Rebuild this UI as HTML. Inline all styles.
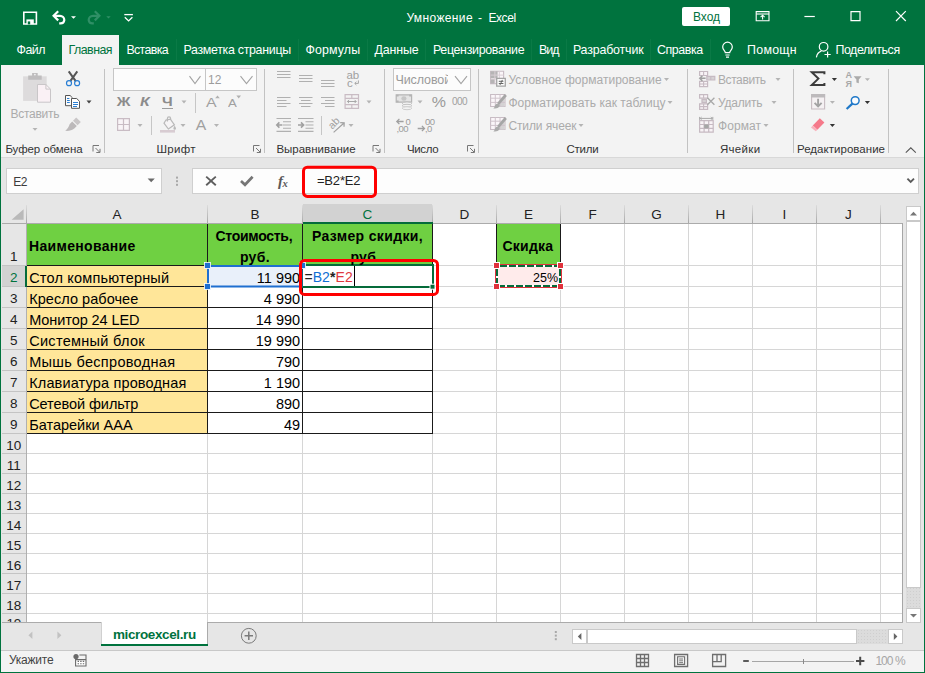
<!DOCTYPE html>
<html lang="ru"><head><meta charset="utf-8"><title>Умножение - Excel</title><style>
html,body{margin:0;padding:0}
body{width:925px;height:673px;overflow:hidden;position:relative;background:#e6e6e6;font-family:"Liberation Sans",sans-serif}
.b{position:absolute}
.t{position:absolute;white-space:pre;font-family:"Liberation Sans",sans-serif;line-height:18px}
svg.ov{position:absolute;left:0;top:0;pointer-events:none}
</style></head>
<body>
<div class="b" style="left:0px;top:0px;width:925px;height:65px;background:#00733e;"></div>
<div class="b" style="left:0px;top:65px;width:925px;height:92px;background:#f3f3f3;"></div>
<div class="b" style="left:0px;top:157px;width:925px;height:1px;background:#d8d8d8;"></div>
<div class="b" style="left:0px;top:158px;width:925px;height:465px;background:#e6e6e6;"></div>
<div class="b" style="left:0px;top:623px;width:925px;height:28px;background:#e6e6e6;"></div>
<div class="b" style="left:0px;top:650px;width:925px;height:23px;background:#f3f3f3;"></div>
<div class="b" style="left:0px;top:650px;width:925px;height:1px;background:#c8c8c8;"></div>
<div class="b" style="left:682px;top:7px;width:48px;height:19px;background:#ffffff;border-radius:2px;"></div>
<div class="b" style="left:62px;top:35px;width:57px;height:30px;background:#f3f3f3;"></div>
<div class="b" style="left:176px;top:39px;width:1px;height:22px;background:#0a7a46;"></div>
<div class="b" style="left:298px;top:39px;width:1px;height:22px;background:#0a7a46;"></div>
<div class="b" style="left:367px;top:39px;width:1px;height:22px;background:#0a7a46;"></div>
<div class="b" style="left:425px;top:39px;width:1px;height:22px;background:#0a7a46;"></div>
<div class="b" style="left:531px;top:39px;width:1px;height:22px;background:#0a7a46;"></div>
<div class="b" style="left:566px;top:39px;width:1px;height:22px;background:#0a7a46;"></div>
<div class="b" style="left:650px;top:39px;width:1px;height:22px;background:#0a7a46;"></div>
<div class="b" style="left:710px;top:39px;width:1px;height:22px;background:#0a7a46;"></div>
<div class="b" style="left:104px;top:69px;width:1px;height:84px;background:#c2c2c2;"></div>
<div class="b" style="left:264px;top:69px;width:1px;height:84px;background:#c2c2c2;"></div>
<div class="b" style="left:384px;top:69px;width:1px;height:84px;background:#c2c2c2;"></div>
<div class="b" style="left:478px;top:69px;width:1px;height:84px;background:#c2c2c2;"></div>
<div class="b" style="left:687px;top:69px;width:1px;height:84px;background:#c2c2c2;"></div>
<div class="b" style="left:793px;top:69px;width:1px;height:84px;background:#c2c2c2;"></div>
<div class="b" style="left:888px;top:69px;width:1px;height:84px;background:#c2c2c2;"></div>
<div class="b" style="left:113px;top:68px;width:93px;height:23px;background:#fcfcfc;border:1px solid #c6c6c6;box-sizing:border-box;"></div>
<div class="b" style="left:205px;top:68px;width:52px;height:23px;background:#fcfcfc;border:1px solid #c6c6c6;box-sizing:border-box;"></div>
<div class="b" style="left:162px;top:108px;width:11px;height:1px;background:#9c9c9c;"></div>
<div class="b" style="left:195px;top:93px;width:1px;height:20px;background:#c6c6c6;"></div>
<div class="b" style="left:151px;top:116px;width:1px;height:19px;background:#c6c6c6;"></div>
<div class="b" style="left:321px;top:116px;width:1px;height:19px;background:#c6c6c6;"></div>
<div class="b" style="left:393px;top:68px;width:78px;height:23px;background:#fcfcfc;border:1px solid #c6c6c6;box-sizing:border-box;"></div>
<div class="b" style="left:394px;top:70px;width:53.6px;height:19px;overflow:hidden"><span class="t u" id="numfmt" style="left:1.5px;top:1px;font-size:12.5px;color:#9a9a9a;letter-spacing:-0.1px">Числовой</span></div>
<span class="t u" style="left:405.5px;top:116.8px;font-size:9.5px;color:#9c9c9c;line-height:9px;letter-spacing:-0.6px">0</span>
<span class="t u" style="left:396.5px;top:124.2px;font-size:9.5px;color:#9c9c9c;line-height:9px;letter-spacing:-0.6px">,00</span>
<span class="t u" style="left:425.0px;top:116.8px;font-size:9.5px;color:#9c9c9c;line-height:9px;letter-spacing:-0.6px">00</span>
<span class="t u" style="left:425.0px;top:124.2px;font-size:9.5px;color:#9c9c9c;line-height:9px;letter-spacing:-0.6px">,0</span>
<div class="b" style="left:6px;top:168px;width:156px;height:26px;background:#fdfdfd;border:1px solid #cfcfcf;box-sizing:border-box;"></div>
<div class="b" style="left:192px;top:168px;width:727px;height:26px;background:#fdfdfd;border:1px solid #cfcfcf;box-sizing:border-box;"></div>
<span class="t" style="left:278px;top:171.5px;font-family:'Liberation Serif',serif;font-style:italic;font-weight:700;font-size:15px;line-height:18px;color:#5a5a5a;letter-spacing:-0.4px">f<span style="font-size:10.5px;position:relative;top:1.5px">x</span></span>
<div class="b" style="left:2px;top:204px;width:900px;height:20px;background:#e6e6e6;"></div>
<div class="b" style="left:27px;top:224px;width:875px;height:398px;background:#ffffff;"></div>
<div class="b" style="left:303px;top:204px;width:129px;height:19px;background:#d2d2d2;"></div>
<div class="b" style="left:26px;top:205px;width:1px;height:18px;background:linear-gradient(#dcdcdc,#a8a8a8)"></div>
<div class="b" style="left:207px;top:205px;width:1px;height:18px;background:linear-gradient(#dcdcdc,#a8a8a8)"></div>
<div class="b" style="left:302px;top:205px;width:1px;height:18px;background:linear-gradient(#dcdcdc,#a8a8a8)"></div>
<div class="b" style="left:432px;top:205px;width:1px;height:18px;background:linear-gradient(#dcdcdc,#a8a8a8)"></div>
<div class="b" style="left:496px;top:205px;width:1px;height:18px;background:linear-gradient(#dcdcdc,#a8a8a8)"></div>
<div class="b" style="left:560px;top:205px;width:1px;height:18px;background:linear-gradient(#dcdcdc,#a8a8a8)"></div>
<div class="b" style="left:624px;top:205px;width:1px;height:18px;background:linear-gradient(#dcdcdc,#a8a8a8)"></div>
<div class="b" style="left:688px;top:205px;width:1px;height:18px;background:linear-gradient(#dcdcdc,#a8a8a8)"></div>
<div class="b" style="left:752px;top:205px;width:1px;height:18px;background:linear-gradient(#dcdcdc,#a8a8a8)"></div>
<div class="b" style="left:816px;top:205px;width:1px;height:18px;background:linear-gradient(#dcdcdc,#a8a8a8)"></div>
<div class="b" style="left:880px;top:205px;width:1px;height:18px;background:linear-gradient(#dcdcdc,#a8a8a8)"></div>
<div class="b" style="left:2px;top:223px;width:901px;height:1px;background:#ababab;"></div>
<div class="b" style="left:303px;top:222px;width:130px;height:2px;background:#056b3a;"></div>
<div class="b" style="left:207px;top:224px;width:1px;height:398px;background:#d6d6d6;"></div>
<div class="b" style="left:302px;top:224px;width:1px;height:398px;background:#d6d6d6;"></div>
<div class="b" style="left:432px;top:224px;width:1px;height:398px;background:#d6d6d6;"></div>
<div class="b" style="left:496px;top:224px;width:1px;height:398px;background:#d6d6d6;"></div>
<div class="b" style="left:560px;top:224px;width:1px;height:398px;background:#d6d6d6;"></div>
<div class="b" style="left:624px;top:224px;width:1px;height:398px;background:#d6d6d6;"></div>
<div class="b" style="left:688px;top:224px;width:1px;height:398px;background:#d6d6d6;"></div>
<div class="b" style="left:752px;top:224px;width:1px;height:398px;background:#d6d6d6;"></div>
<div class="b" style="left:816px;top:224px;width:1px;height:398px;background:#d6d6d6;"></div>
<div class="b" style="left:880px;top:224px;width:1px;height:398px;background:#d6d6d6;"></div>
<div class="b" style="left:27px;top:265px;width:875px;height:1px;background:#d6d6d6;"></div>
<div class="b" style="left:27px;top:286px;width:875px;height:1px;background:#d6d6d6;"></div>
<div class="b" style="left:27px;top:307px;width:875px;height:1px;background:#d6d6d6;"></div>
<div class="b" style="left:27px;top:328px;width:875px;height:1px;background:#d6d6d6;"></div>
<div class="b" style="left:27px;top:349px;width:875px;height:1px;background:#d6d6d6;"></div>
<div class="b" style="left:27px;top:370px;width:875px;height:1px;background:#d6d6d6;"></div>
<div class="b" style="left:27px;top:391px;width:875px;height:1px;background:#d6d6d6;"></div>
<div class="b" style="left:27px;top:412px;width:875px;height:1px;background:#d6d6d6;"></div>
<div class="b" style="left:27px;top:433px;width:875px;height:1px;background:#d6d6d6;"></div>
<div class="b" style="left:27px;top:453px;width:875px;height:1px;background:#d6d6d6;"></div>
<div class="b" style="left:27px;top:473px;width:875px;height:1px;background:#d6d6d6;"></div>
<div class="b" style="left:27px;top:493px;width:875px;height:1px;background:#d6d6d6;"></div>
<div class="b" style="left:27px;top:513px;width:875px;height:1px;background:#d6d6d6;"></div>
<div class="b" style="left:27px;top:533px;width:875px;height:1px;background:#d6d6d6;"></div>
<div class="b" style="left:27px;top:553px;width:875px;height:1px;background:#d6d6d6;"></div>
<div class="b" style="left:27px;top:573px;width:875px;height:1px;background:#d6d6d6;"></div>
<div class="b" style="left:27px;top:593px;width:875px;height:1px;background:#d6d6d6;"></div>
<div class="b" style="left:27px;top:613px;width:875px;height:1px;background:#d6d6d6;"></div>
<div class="b" style="left:902px;top:223px;width:1px;height:400px;background:#a6a6a6;"></div>
<div class="b" style="left:2px;top:266px;width:24px;height:20px;background:#d2d2d2;"></div>
<div class="b" style="left:2px;top:265px;width:24px;height:1px;background:#c4c4c4;"></div>
<div class="b" style="left:2px;top:286px;width:24px;height:1px;background:#c4c4c4;"></div>
<div class="b" style="left:2px;top:307px;width:24px;height:1px;background:#c4c4c4;"></div>
<div class="b" style="left:2px;top:328px;width:24px;height:1px;background:#c4c4c4;"></div>
<div class="b" style="left:2px;top:349px;width:24px;height:1px;background:#c4c4c4;"></div>
<div class="b" style="left:2px;top:370px;width:24px;height:1px;background:#c4c4c4;"></div>
<div class="b" style="left:2px;top:391px;width:24px;height:1px;background:#c4c4c4;"></div>
<div class="b" style="left:2px;top:412px;width:24px;height:1px;background:#c4c4c4;"></div>
<div class="b" style="left:2px;top:433px;width:24px;height:1px;background:#c4c4c4;"></div>
<div class="b" style="left:2px;top:453px;width:24px;height:1px;background:#c4c4c4;"></div>
<div class="b" style="left:2px;top:473px;width:24px;height:1px;background:#c4c4c4;"></div>
<div class="b" style="left:2px;top:493px;width:24px;height:1px;background:#c4c4c4;"></div>
<div class="b" style="left:2px;top:513px;width:24px;height:1px;background:#c4c4c4;"></div>
<div class="b" style="left:2px;top:533px;width:24px;height:1px;background:#c4c4c4;"></div>
<div class="b" style="left:2px;top:553px;width:24px;height:1px;background:#c4c4c4;"></div>
<div class="b" style="left:2px;top:573px;width:24px;height:1px;background:#c4c4c4;"></div>
<div class="b" style="left:2px;top:593px;width:24px;height:1px;background:#c4c4c4;"></div>
<div class="b" style="left:2px;top:613px;width:24px;height:1px;background:#c4c4c4;"></div>
<div class="b" style="left:26px;top:224px;width:1px;height:398px;background:#b0b0b0;"></div>
<div class="b" style="left:25px;top:266px;width:2px;height:21px;background:#056b3a;"></div>
<div class="b" style="left:2px;top:614px;width:24px;height:8px;overflow:hidden"><span class="t c" style="left:4.6px;top:1px;font-size:13.5px;color:#2b2b2b;letter-spacing:-0.3px">19</span></div>
<div class="b" style="left:27px;top:224px;width:405px;height:41px;background:#6fd042;"></div>
<div class="b" style="left:497px;top:224px;width:63px;height:41px;background:#6fd042;"></div>
<div class="b" style="left:27px;top:266px;width:180px;height:167px;background:#ffe699;"></div>
<div class="b" style="left:208px;top:266px;width:94px;height:20px;background:#e9f0fa;"></div>
<div class="b" style="left:496px;top:265px;width:65px;height:22px;background:#ffebeb;"></div>
<div class="b" style="left:207px;top:224px;width:1px;height:210px;background:#1a1a1a;"></div>
<div class="b" style="left:302px;top:224px;width:1px;height:210px;background:#1a1a1a;"></div>
<div class="b" style="left:432px;top:224px;width:1px;height:210px;background:#1a1a1a;"></div>
<div class="b" style="left:27px;top:265px;width:406px;height:1px;background:#1a1a1a;"></div>
<div class="b" style="left:27px;top:286px;width:406px;height:1px;background:#1a1a1a;"></div>
<div class="b" style="left:27px;top:307px;width:406px;height:1px;background:#1a1a1a;"></div>
<div class="b" style="left:27px;top:328px;width:406px;height:1px;background:#1a1a1a;"></div>
<div class="b" style="left:27px;top:349px;width:406px;height:1px;background:#1a1a1a;"></div>
<div class="b" style="left:27px;top:370px;width:406px;height:1px;background:#1a1a1a;"></div>
<div class="b" style="left:27px;top:391px;width:406px;height:1px;background:#1a1a1a;"></div>
<div class="b" style="left:27px;top:412px;width:406px;height:1px;background:#1a1a1a;"></div>
<div class="b" style="left:27px;top:433px;width:406px;height:1px;background:#1a1a1a;"></div>
<div class="b" style="left:496px;top:224px;width:1px;height:42px;background:#1a1a1a;"></div>
<div class="b" style="left:560px;top:224px;width:1px;height:42px;background:#1a1a1a;"></div>
<div class="b" style="left:496px;top:265px;width:65px;height:1px;background:#1a1a1a;"></div>
<div class="b" style="left:301px;top:264px;width:133px;height:24px;background:#fff;border:2px solid #056b3a;box-sizing:border-box;"></div>
<span class="t c" id="c2f" style="left:304.4px;top:268px;font-size:14px;letter-spacing:0.1px;line-height:18px;color:#222"><span>=</span><span style="color:#0f6fd4">B2</span><span style="font-weight:700">*</span><span style="color:#e0393e">E2</span></span>
<div class="b" style="left:354px;top:266px;width:1px;height:20px;background:#000;"></div>
<div class="b" style="left:906px;top:221px;width:15px;height:388px;background-color:#dcdcdc;background-image:radial-gradient(#cfcfcf 0.6px,transparent 0.7px);background-size:3px 3px;"></div>
<div class="b" style="left:906px;top:206px;width:15px;height:15px;background:#fff;border:1px solid #c9c9c9;box-sizing:border-box;"></div>
<div class="b" style="left:906px;top:221px;width:15px;height:367px;background:#fff;border:1px solid #c9c9c9;box-sizing:border-box;"></div>
<div class="b" style="left:906px;top:608px;width:15px;height:15px;background:#fff;border:1px solid #c9c9c9;box-sizing:border-box;"></div>
<div class="b" style="left:572px;top:629px;width:331px;height:15px;background-color:#dcdcdc;background-image:radial-gradient(#cfcfcf 0.6px,transparent 0.7px);background-size:3px 3px;"></div>
<div class="b" style="left:572px;top:629px;width:15px;height:15px;background:#fff;border:1px solid #c9c9c9;box-sizing:border-box;"></div>
<div class="b" style="left:587px;top:629px;width:270px;height:15px;background:#fff;border:1px solid #c9c9c9;box-sizing:border-box;"></div>
<div class="b" style="left:888px;top:629px;width:15px;height:15px;background:#fff;border:1px solid #c9c9c9;box-sizing:border-box;"></div>
<div class="b" style="left:2px;top:622px;width:901px;height:1px;background:#ababab;"></div>
<div class="b" style="left:102px;top:622px;width:105px;height:23px;background:#fff;"></div>
<div class="b" style="left:207px;top:622px;width:1px;height:23px;background:#ababab;"></div>
<div class="b" style="left:101px;top:622px;width:1px;height:23px;background:#d0d0d0;"></div>
<div class="b" style="left:101px;top:644px;width:107px;height:2px;background:#00733e;"></div>
<div class="b" style="left:752px;top:661px;width:102px;height:1px;background:#a6a6a6;"></div>
<div class="b" style="left:803px;top:659px;width:1px;height:5px;background:#8a8a8a;"></div>
<div class="b" style="left:0px;top:65px;width:1px;height:608px;background:#00733e;"></div>
<div class="b" style="left:924px;top:65px;width:1px;height:608px;background:#00733e;"></div>
<div class="b" style="left:0px;top:672px;width:925px;height:1px;background:#00733e;"></div>
<span class="t u" style="left:406.40px;top:9.14px;font-size:12px;color:#ffffff;letter-spacing:0.373px;">Умножение</span>
<span class="t u" style="left:477.90px;top:9.14px;font-size:12px;color:#ffffff;">-</span>
<span class="t u" style="left:488.40px;top:9.14px;font-size:12px;color:#ffffff;letter-spacing:-0.411px;">Excel</span>
<span class="t u" style="left:692.90px;top:8.14px;font-size:12px;color:#00733e;letter-spacing:0.015px;">Вход</span>
<span class="t u" style="left:16.40px;top:41.14px;font-size:12.4px;color:#ffffff;letter-spacing:-0.423px;">Файл</span>
<span class="t u" style="left:68.40px;top:41.14px;font-size:12.4px;color:#00733e;letter-spacing:-0.495px;">Главная</span>
<span class="t u" style="left:126.40px;top:41.14px;font-size:12.4px;color:#ffffff;letter-spacing:-0.644px;">Вставка</span>
<span class="t u" style="left:183.40px;top:41.14px;font-size:12.4px;color:#ffffff;letter-spacing:-0.294px;">Разметка страницы</span>
<span class="t u" style="left:305.40px;top:41.14px;font-size:12.4px;color:#ffffff;letter-spacing:0.130px;">Формулы</span>
<span class="t u" style="left:374.40px;top:41.14px;font-size:12.4px;color:#ffffff;letter-spacing:-0.113px;">Данные</span>
<span class="t u" style="left:432.90px;top:41.14px;font-size:12.4px;color:#ffffff;letter-spacing:-0.307px;">Рецензирование</span>
<span class="t u" style="left:538.90px;top:41.14px;font-size:12.4px;color:#ffffff;letter-spacing:-0.861px;">Вид</span>
<span class="t u" style="left:572.90px;top:41.14px;font-size:12.4px;color:#ffffff;letter-spacing:-0.157px;">Разработчик</span>
<span class="t u" style="left:656.90px;top:41.14px;font-size:12.4px;color:#ffffff;letter-spacing:-0.402px;">Справка</span>
<span class="t u" style="left:747.10px;top:41.14px;font-size:12.4px;color:#ffffff;letter-spacing:0.250px;">Помощн</span>
<span class="t u" style="left:835.40px;top:41.14px;font-size:12.4px;color:#ffffff;letter-spacing:-0.414px;">Поделиться</span>
<span class="t u" style="left:5.40px;top:140.33px;font-size:11.5px;color:#333;letter-spacing:-0.087px;">Буфер обмена</span>
<span class="t u" style="left:156.40px;top:140.33px;font-size:11.5px;color:#333;letter-spacing:0.339px;">Шрифт</span>
<span class="t u" style="left:276.40px;top:140.33px;font-size:11.5px;color:#333;">Выравнивание</span>
<span class="t u" style="left:406.90px;top:140.33px;font-size:11.5px;color:#333;letter-spacing:-0.345px;">Число</span>
<span class="t u" style="left:566.40px;top:140.33px;font-size:11.5px;color:#333;letter-spacing:-0.235px;">Стили</span>
<span class="t u" style="left:719.90px;top:140.33px;font-size:11.5px;color:#333;letter-spacing:0.324px;">Ячейки</span>
<span class="t u" style="left:797.00px;top:140.33px;font-size:11.5px;color:#333;letter-spacing:0.030px;">Редактирование</span>
<span class="t u" style="left:10.40px;top:105.14px;font-size:12px;color:#ababab;letter-spacing:-0.239px;">Вставить</span>
<span class="t u" style="left:208.00px;top:70.74px;font-size:12px;color:#9c9c9c;">12</span>
<span class="t u" style="left:118.09px;top:93.14px;font-size:12.5px;color:#8c8c8c;font-weight:700;transform:scaleX(1.211);">Ж</span>
<span class="t u" style="left:140.91px;top:93.14px;font-size:12.5px;color:#8c8c8c;font-weight:700;font-style:italic;transform:scaleX(1.262);">К</span>
<span class="t u" style="left:162.85px;top:92.64px;font-size:12.5px;color:#8c8c8c;font-weight:700;transform:scaleX(1.216);">Ч</span>
<span class="t u" style="left:206.83px;top:94.45px;font-size:12.8px;color:#a0a0a0;transform:scaleX(1.240);">А</span>
<span class="t u" style="left:229.33px;top:95.32px;font-size:10.4px;color:#a0a0a0;transform:scaleX(1.268);">А</span>
<span class="t u" style="left:196.21px;top:115.57px;font-size:14.8px;color:#a0a0a0;transform:scaleX(1.063);">А</span>
<span class="t u" style="left:346.40px;top:66.33px;font-size:11.5px;color:#a0a0a0;">ab</span>
<span class="t u" style="left:347.00px;top:74.13px;font-size:11.5px;color:#a0a0a0;">c</span>
<span class="t u" style="left:431.60px;top:93.08px;font-size:15.5px;color:#9a9a9a;transform:scaleX(1.029);">%</span>
<span class="t u" style="left:451.90px;top:93.31px;font-size:10px;color:#a0a0a0;letter-spacing:-0.494px;">000</span>
<span class="t u" style="left:508.40px;top:71.14px;font-size:12px;color:#ababab;letter-spacing:0.024px;">Условное форматирование</span>
<span class="t u" style="left:508.40px;top:94.14px;font-size:12px;color:#ababab;letter-spacing:0.044px;">Форматировать как таблицу</span>
<span class="t u" style="left:508.40px;top:117.14px;font-size:12px;color:#ababab;letter-spacing:-0.107px;">Стили ячеек</span>
<span class="t u" style="left:717.90px;top:71.14px;font-size:12px;color:#ababab;letter-spacing:-0.382px;">Вставить</span>
<span class="t u" style="left:717.90px;top:94.14px;font-size:12px;color:#ababab;letter-spacing:-0.188px;">Удалить</span>
<span class="t u" style="left:717.90px;top:117.14px;font-size:12px;color:#ababab;letter-spacing:0.112px;">Формат</span>
<span class="t u" style="left:845.40px;top:66.30px;font-size:9px;color:#a8a8a8;font-weight:700;">А</span>
<span class="t u" style="left:845.40px;top:74.50px;font-size:9px;color:#a8a8a8;font-weight:700;">Я</span>
<span class="t u" style="left:13.20px;top:172.64px;font-size:12px;color:#3c3c3c;letter-spacing:-0.488px;">E2</span>
<span class="t c" style="left:316.90px;top:172.15px;font-size:13px;color:#222;letter-spacing:-0.151px;">=B2*E2</span>
<span class="t c" style="left:112.49px;top:205.66px;font-size:13.5px;color:#222;">A</span>
<span class="t c" style="left:250.49px;top:205.66px;font-size:13.5px;color:#222;">B</span>
<span class="t c" style="left:362.62px;top:205.66px;font-size:13.5px;color:#00733e;">C</span>
<span class="t c" style="left:459.62px;top:205.66px;font-size:13.5px;color:#222;">D</span>
<span class="t c" style="left:523.99px;top:205.66px;font-size:13.5px;color:#222;">E</span>
<span class="t c" style="left:588.38px;top:205.66px;font-size:13.5px;color:#222;">F</span>
<span class="t c" style="left:651.24px;top:205.66px;font-size:13.5px;color:#222;">G</span>
<span class="t c" style="left:715.62px;top:205.66px;font-size:13.5px;color:#222;">H</span>
<span class="t c" style="left:782.62px;top:205.66px;font-size:13.5px;color:#222;">I</span>
<span class="t c" style="left:845.12px;top:205.66px;font-size:13.5px;color:#222;">J</span>
<span class="t c" style="left:10.04px;top:248.36px;font-size:13.5px;color:#222;">1</span>
<span class="t c" style="left:10.04px;top:269.16px;font-size:13.5px;color:#00733e;">2</span>
<span class="t c" style="left:10.04px;top:290.16px;font-size:13.5px;color:#222;">3</span>
<span class="t c" style="left:10.04px;top:311.16px;font-size:13.5px;color:#222;">4</span>
<span class="t c" style="left:10.04px;top:332.16px;font-size:13.5px;color:#222;">5</span>
<span class="t c" style="left:10.04px;top:353.16px;font-size:13.5px;color:#222;">6</span>
<span class="t c" style="left:10.04px;top:374.16px;font-size:13.5px;color:#222;">7</span>
<span class="t c" style="left:10.04px;top:395.16px;font-size:13.5px;color:#222;">8</span>
<span class="t c" style="left:10.04px;top:416.16px;font-size:13.5px;color:#222;">9</span>
<span class="t c" style="left:6.28px;top:436.66px;font-size:13.5px;color:#222;">10</span>
<span class="t c" style="left:6.79px;top:456.66px;font-size:13.5px;color:#222;">11</span>
<span class="t c" style="left:6.28px;top:476.66px;font-size:13.5px;color:#222;">12</span>
<span class="t c" style="left:6.28px;top:496.66px;font-size:13.5px;color:#222;">13</span>
<span class="t c" style="left:6.28px;top:516.66px;font-size:13.5px;color:#222;">14</span>
<span class="t c" style="left:6.28px;top:536.66px;font-size:13.5px;color:#222;">15</span>
<span class="t c" style="left:6.28px;top:556.66px;font-size:13.5px;color:#222;">16</span>
<span class="t c" style="left:6.28px;top:576.66px;font-size:13.5px;color:#222;">17</span>
<span class="t c" style="left:6.28px;top:596.66px;font-size:13.5px;color:#222;">18</span>
<span class="t c" style="left:29.00px;top:236.66px;font-size:14px;color:#000;font-weight:700;letter-spacing:0.326px;">Наименование</span>
<span class="t c" style="left:215.40px;top:227.16px;font-size:14px;color:#000;font-weight:700;letter-spacing:-0.269px;">Стоимость,</span>
<span class="t c" style="left:239.90px;top:247.96px;font-size:14px;color:#000;font-weight:700;letter-spacing:0.332px;">руб.</span>
<span class="t c" style="left:311.90px;top:227.16px;font-size:14px;color:#000;font-weight:700;letter-spacing:0.354px;">Размер скидки,</span>
<span class="t c" style="left:350.40px;top:247.96px;font-size:14px;color:#000;font-weight:700;letter-spacing:0.332px;">руб.</span>
<span class="t c" style="left:502.40px;top:236.66px;font-size:14px;color:#000;font-weight:700;letter-spacing:0.259px;">Скидка</span>
<span class="t c" style="left:29.20px;top:268.57px;font-size:14.5px;color:#000;letter-spacing:0.192px;">Стол компьютерный</span>
<span class="t c" style="left:256.82px;top:268.57px;font-size:14.5px;color:#000;">11 990</span>
<span class="t c" style="left:29.20px;top:289.57px;font-size:14.5px;color:#000;letter-spacing:0.053px;">Кресло рабочее</span>
<span class="t c" style="left:263.80px;top:289.57px;font-size:14.5px;color:#000;">4 990</span>
<span class="t c" style="left:29.20px;top:310.57px;font-size:14.5px;color:#000;letter-spacing:-0.079px;">Монитор 24 LED</span>
<span class="t c" style="left:255.74px;top:310.57px;font-size:14.5px;color:#000;">14 990</span>
<span class="t c" style="left:29.20px;top:331.57px;font-size:14.5px;color:#000;letter-spacing:0.294px;">Системный блок</span>
<span class="t c" style="left:255.74px;top:331.57px;font-size:14.5px;color:#000;">19 990</span>
<span class="t c" style="left:29.20px;top:352.57px;font-size:14.5px;color:#000;letter-spacing:0.311px;">Мышь беспроводная</span>
<span class="t c" style="left:275.90px;top:352.57px;font-size:14.5px;color:#000;">790</span>
<span class="t c" style="left:29.20px;top:373.57px;font-size:14.5px;color:#000;letter-spacing:0.152px;">Клавиатура проводная</span>
<span class="t c" style="left:263.80px;top:373.57px;font-size:14.5px;color:#000;">1 190</span>
<span class="t c" style="left:29.20px;top:394.57px;font-size:14.5px;color:#000;letter-spacing:-0.066px;">Сетевой фильтр</span>
<span class="t c" style="left:275.90px;top:394.57px;font-size:14.5px;color:#000;">890</span>
<span class="t c" style="left:29.20px;top:415.57px;font-size:14.5px;color:#000;letter-spacing:-0.011px;">Батарейки ААА</span>
<span class="t c" style="left:283.96px;top:415.57px;font-size:14.5px;color:#000;">49</span>
<span class="t c" style="left:533.10px;top:268.64px;font-size:12.5px;color:#000;letter-spacing:-0.016px;">25%</span>
<span class="t c" style="left:113.00px;top:626.16px;font-size:13.5px;color:#00733e;font-weight:700;letter-spacing:-0.383px;">microexcel.ru</span>
<span class="t u" style="left:8.90px;top:651.14px;font-size:12px;color:#444;letter-spacing:-0.224px;">Укажите</span>
<span class="t u" style="left:875.40px;top:651.64px;font-size:12px;color:#a6a6a6;letter-spacing:-0.958px;">100 %</span>
<svg class="ov" width="925" height="673" viewBox="0 0 925 673">
<path d="M23.8 12.2h12.6v11.8h-12.6z" fill="none" stroke="#ffffff" stroke-width="1.6"/><path d="M26.4 19.4h7.4v4.8h-7.4z" fill="#ffffff"/><path d="M27.8 21.4h2.4v3h-2.4z" fill="#00733e"/>
<g fill="none" stroke="#ffffff" stroke-width="2.2" stroke-linecap="butt"><path d="M58.2 11.2l-4.6 4.6 4.6 4.6"/><path d="M54 15.8h6a4.3 4.3 0 0 1 4.3 4.3a3.7 3.7 0 0 1 -3.7 3.3h-1.4"/></g>
<path d="M71 16.2h5l-2.5 2.6z" fill="#ffffff"/>
<g fill="none" stroke="#2f8f66" stroke-width="2.2"><path d="M94.8 11.2l4.6 4.6 -4.6 4.6"/><path d="M99 15.8h-6a4.3 4.3 0 0 0 -4.3 4.3a3.7 3.7 0 0 0 3.7 3.3h1.4"/></g>
<path d="M106.3 16.2h4.4l-2.2 2.4z" fill="#2f8f66"/>
<g fill="none" stroke="#ffffff" stroke-width="1.3"><path d="M124.3 14.6h8.6"/><path d="M124.8 17.3l3.8 3.6 3.8-3.6"/></g>
<g fill="none" stroke="#ffffff" stroke-width="1.1"><path d="M756.2 11.6h12.8v9.2h-12.8z"/><path d="M756.2 14h12.8"/><path d="M762.6 19.4v-4"/><path d="M760.6 17.2l2-2 2 2"/></g>
<path d="M804.4 16.5h10.4" stroke="#ffffff" stroke-width="1.2"/>
<path d="M851 11.6h9v9h-9z" fill="none" stroke="#ffffff" stroke-width="1.2"/>
<path d="M896 11.2l9.8 9.8M905.8 11.2l-9.8 9.8" stroke="#ffffff" stroke-width="1.2"/>
<g fill="none" stroke="#ffffff" stroke-width="1.2"><path d="M725.3 52.6c0-1.6-2.6-2.6-2.6-5.6a4.8 4.8 0 0 1 9.6 0c0 3-2.6 4-2.6 5.6z"/><path d="M725.4 55h4.2M726 57.2h3"/></g>
<g fill="none" stroke="#ffffff" stroke-width="1.2"><circle cx="823.6" cy="46.8" r="4.3"/><path d="M816.4 57.4c0.6-3.6 2.8-5.6 5-6.2"/><path d="M827.6 51.4v6.2M824.5 54.5h6.2"/></g>
<g fill="none" stroke="#777" stroke-width="1"><path d="M93.0 151.5v-6h6"/><path d="M95.5 148l4 4"/><path d="M100.0 148.8v3.7h-3.7"/></g>
<g fill="none" stroke="#777" stroke-width="1"><path d="M253.5 151.5v-6h6"/><path d="M256 148l4 4"/><path d="M260.5 148.8v3.7h-3.7"/></g>
<g fill="none" stroke="#777" stroke-width="1"><path d="M373.0 151.5v-6h6"/><path d="M375.5 148l4 4"/><path d="M380.0 148.8v3.7h-3.7"/></g>
<g fill="none" stroke="#777" stroke-width="1"><path d="M467.5 151.5v-6h6"/><path d="M470 148l4 4"/><path d="M474.5 148.8v3.7h-3.7"/></g>
<path d="M905.8 152.6l5-4.8 5 4.8" fill="none" stroke="#555" stroke-width="1.1"/>
<g><path d="M23.1 76.3h23.6v24.6h-23.6z" fill="#dddbdc"/><path d="M28.2 75.6h3.9v-2.6h5.6v2.6h4v4.1h-13.5z" fill="#bfbdbe"/><circle cx="34.9" cy="74.6" r="0.9" fill="#f3f3f3"/><path d="M37.5 84.5h8.4l4.6 4.6v13.1h-13z" fill="#faf1f5" stroke="#c9c6c8" stroke-width="1"/><path d="M45.9 84.5v4.6h4.6" fill="none" stroke="#c9c6c8" stroke-width="1"/></g>
<path d="M32.5 127.9h5.0l-2.5 2.8z" fill="#b4b4b4"/>
<g fill="none"><path d="M68.7 71.4l7.2 10M77.3 71.4l-7.2 10" stroke="#555" stroke-width="2"/><circle cx="69" cy="83.2" r="2.5" stroke="#2a7fd4" stroke-width="1.2" fill="#f3f3f3"/><circle cx="77.1" cy="83.2" r="2.5" stroke="#2a7fd4" stroke-width="1.2" fill="#f3f3f3"/></g>
<g stroke="#555" stroke-width="1"><path d="M65.5 95.5h4.6l2.2 2.2v8h-6.8z" fill="#fbfbfb"/><path d="M71.5 98.5h5.2l2.8 2.8v7h-8z" fill="#fff"/></g><g stroke="#2a7fd4" stroke-width="1"><path d="M67 98.5h2.4M67 100.5h2.8M67 102.5h2.8M73 102.5h5M73 104.5h5M73 106.5h4"/></g>
<path d="M86.5 100.6h5.0l-2.5 2.8z" fill="#444"/>
<g fill="#c9c6c7"><path d="M76.2 117.6l4.6 4.4-3.2 3.2-4.6-4.4z"/><path d="M72.2 121.6l4.6 4.4-2.2 2.2c-2.6 2.4-6.4 3-9.4 2.6 2-1.6 3.6-3.8 4.4-6.6z" fill="#bcb9ba"/></g>
<path d="M189.5 76.2L195.0 83.6L200.5 76.2" fill="none" stroke="#a3a3a3" stroke-width="1.1"/>
<path d="M240.5 76.2L246.5 83.6L252.5 76.2" fill="none" stroke="#a3a3a3" stroke-width="1.1"/>
<path d="M181.5 100.6h5.0l-2.5 2.8z" fill="#b4b4b4"/>
<path d="M215.2 98.2h4.6l-2.3-2.8z" fill="#b0b0b0"/>
<path d="M236.4 95.6h4.6l-2.3 2.8z" fill="#b0b0b0"/>
<g fill="none" stroke="#c9bcc4" stroke-width="1.2"><path d="M117.6 118.6h11.8v11.8h-11.8z" fill="#f9f4f7"/><path d="M123.5 118.6v11.8M117.6 124.5h11.8"/></g>
<path d="M137.5 124.1h5.0l-2.5 2.8z" fill="#b4b4b4"/>
<g fill="none" stroke="#b9b9b9" stroke-width="1.2"><path d="M165.8 120.2l4.6 -1 4 5.6-6 4.2-4.4-5.8z" fill="#f6f4f5"/><path d="M167.4 121.6v-3.2a1.6 1.6 0 0 1 3.2 0v1"/></g><path d="M174.6 125.4c.8 1.4 1.4 2.2 1.4 3a1.3 1.3 0 0 1 -2.6 0c0-.8.6-1.6 1.2-3z" fill="#b9b9b9"/><path d="M160 130h15v2.6h-15z" fill="#d8ccd2"/>
<path d="M180.5 124.1h5.0l-2.5 2.8z" fill="#b4b4b4"/>
<path d="M214.0 124.1h5.0l-2.5 2.8z" fill="#b4b4b4"/>
<path d="M277 71.5H290.5M277 74.5H290.5M277 77.5H290.5" stroke="#b0b0b0" stroke-width="1.1" fill="none"/>
<path d="M299 75.5H312.5M299 78.5H312.5M299 81.5H312.5" stroke="#b0b0b0" stroke-width="1.1" fill="none"/>
<path d="M321 80.5H334.5M321 83.5H334.5M321 86.5H334.5" stroke="#b0b0b0" stroke-width="1.1" fill="none"/>
<path d="M277 97.5H290.5M277 100.5H286.5M277 103.5H290.5M277 106.5H286.5" stroke="#b0b0b0" stroke-width="1.1" fill="none"/>
<path d="M299 97.5H312.5M301 100.5H310.5M299 103.5H312.5M301 106.5H310.5" stroke="#b0b0b0" stroke-width="1.1" fill="none"/>
<path d="M321 97.5H334.5M325 100.5H334.5M321 103.5H334.5M325 106.5H334.5" stroke="#b0b0b0" stroke-width="1.1" fill="none"/>
<path d="M358.4 80.4v3h-3.4M356.4 81.8l-1.7 1.6 1.7 1.6" fill="none" stroke="#a8a8a8" stroke-width="1"/>
<g fill="none" stroke="#c9bcc4" stroke-width="1.2"><path d="M345.1 94.6h13.4v13.8h-13.4z"/><path d="M345.1 98.4h13.4M345.1 104.6h13.4M351.8 94.6v3.8M351.8 104.6v3.8"/></g><path d="M347.4 101.5h8.8M349 99.9l-1.6 1.6 1.6 1.6M354.6 99.9l1.6 1.6-1.6 1.6" fill="none" stroke="#a8a8a8" stroke-width="1"/>
<path d="M366.5 100.6h5.0l-2.5 2.8z" fill="#b4b4b4"/>
<path d="M276.5 118.5h14.5M283 121.8h8M283 125h8M283 128.2h8M276.5 131.4h14.5" stroke="#b0b0b0" stroke-width="1.1" fill="none"/><path d="M276.8 125h5.6M279.4 122.4l-2.6 2.6 2.6 2.6" stroke="#a0a0a0" stroke-width="1.6" fill="none"/>
<path d="M298 118.5h15.5M305.5 121.8h8M305.5 125h8M305.5 128.2h8M298 131.4h15.5" stroke="#b0b0b0" stroke-width="1.1" fill="none"/><path d="M298 125h5.6M301 122.4l2.6 2.6-2.6 2.6" stroke="#a0a0a0" stroke-width="1.6" fill="none"/>
<g transform="rotate(-45 335 124)"><text x="329" y="126" font-family="Liberation Sans, sans-serif" font-size="10.5" fill="#a0a0a0">ab</text></g><path d="M333.6 132.4l10.4-9.4M340.2 122.6l4 .2-.2 4" stroke="#a0a0a0" stroke-width="1.2" fill="none"/>
<path d="M348.5 124.1h5.0l-2.5 2.8z" fill="#b4b4b4"/>
<path d="M455 76.2L461.0 83.6L467 76.2" fill="none" stroke="#a3a3a3" stroke-width="1.1"/>
<g><path d="M396.2 94.8h15.4v7.4h-15.4z" fill="#e4e4e4" stroke="#b4b4b4" stroke-width="1.2"/><ellipse cx="403.9" cy="98.5" rx="2.6" ry="2.2" fill="#c6c6c6"/><path d="M396.2 94.8h2.4v1.8h-2.4zM409.2 94.8h2.4v1.8h-2.4zM396.2 100.4h2.4v1.8h-2.4z" fill="#b4b4b4"/><ellipse cx="407" cy="103.4" rx="4.8" ry="1.5" fill="#f3f3f3" stroke="#bdbdbd" stroke-width="1"/><ellipse cx="407" cy="105.8" rx="4.8" ry="1.5" fill="#f3f3f3" stroke="#c4c4c4" stroke-width="1"/><ellipse cx="407" cy="108.2" rx="4.8" ry="1.5" fill="#f3f3f3" stroke="#cdcdcd" stroke-width="1"/></g>
<path d="M417.5 100.6h5.0l-2.5 2.8z" fill="#b4b4b4"/>
<path d="M396.6 121.5h7M399.4 118.9l-2.6 2.6 2.6 2.6" stroke="#a0a0a0" stroke-width="1.3" fill="none"/>
<path d="M417.7 128.5h7M421.9 125.9l2.6 2.6-2.6 2.6" stroke="#a0a0a0" stroke-width="1.3" fill="none"/>
<g><path d="M490.6 71.2h13v12.4h-13z" fill="#fbf6f9" stroke="#c8bcc4" stroke-width="1.1"/><path d="M490.6 71.2h7v7h-7zM490.6 79.1h4.4v4.5h-4.4z" fill="#b6b4b5"/><path d="M490.6 75.1h13M490.6 79.1h13M494.9 71.2v12.4M499.3 71.2v12.4" stroke="#d9cfd5" stroke-width="1" fill="none"/><path d="M496.7 78.4h8.6v7.8h-8.6z" fill="#fbfbfb" stroke="#a4a4a4" stroke-width="1.3"/><path d="M498.8 81.3h4.6M498.8 83.5h4.6M502.4 79.9l-2.4 5" stroke="#666" stroke-width="1" fill="none"/></g>
<g><path d="M490.6 94.5h14.4v12h-14.4z" fill="#fbf6f9" stroke="#c8bcc4" stroke-width="1.1"/><path d="M504.6 96.4v10.1h-9.6z" fill="#d4d2d3"/><path d="M490.6 98.2h14.4M490.6 102.4h14.4M495.3 94.5v12M500 94.5v12" stroke="#cfc4cb" stroke-width="1" fill="none"/><path d="M505.8 95.0l-7.6 8.8" stroke="#a6a6a6" stroke-width="2.8" fill="none"/><path d="M498.6 104.0c-1.2-.8-3-.2-3.6 1.4-.4 1.2-.6 2.2-1.6 3 2.4.6 5-.2 6-1.8.6-1 .2-2-.8-2.6z" fill="#ababab"/></g>
<g><path d="M490.6 117.5h14.4v12h-14.4z" fill="#fbf6f9" stroke="#c8bcc4" stroke-width="1.1"/><path d="M504.6 119.4v10.1h-9.6z" fill="#d4d2d3"/><path d="M490.6 121.2h14.4M490.6 125.4h14.4M495.3 117.5v12M500 117.5v12" stroke="#cfc4cb" stroke-width="1" fill="none"/><path d="M505.8 118.0l-7.6 8.8" stroke="#a6a6a6" stroke-width="2.8" fill="none"/><path d="M498.6 127.0c-1.2-.8-3-.2-3.6 1.4-.4 1.2-.6 2.2-1.6 3 2.4.6 5-.2 6-1.8.6-1 .2-2-.8-2.6z" fill="#ababab"/></g>
<path d="M664.0 78.1h5.0l-2.5 2.8z" fill="#b4b4b4"/>
<path d="M667.5 101.1h5.0l-2.5 2.8z" fill="#b4b4b4"/>
<path d="M578.5 124.1h5.0l-2.5 2.8z" fill="#b4b4b4"/>
<g fill="#f8f3f6" stroke="#c6bac2" stroke-width="1.2"><path d="M699.6 71.5h8v4h-8z"/><path d="M699.6 81.3h8v5.4h-8z"/><path d="M706.8 76.4h8v3.6h-8z" fill="#d6d2d4"/></g><path d="M703.6 71.5v4M703.6 81.3v5.4M699.6 84.0h8M710.8 76.4v3.6" stroke="#c6bac2" stroke-width="1.1" fill="none"/><path d="M699.6 78.3h6M702.4 75.7l-2.6 2.6 2.6 2.6" stroke="#a0a0a0" stroke-width="1.5" fill="none"/>
<g fill="#f8f3f6" stroke="#c6bac2" stroke-width="1.2"><path d="M699.6 94.7h8v3.4h-8z"/><path d="M699.6 103.9h8v5.4h-8z"/><path d="M702 99.4h4.4v3.2h-4.4z" fill="#d6d2d4"/></g><path d="M703.6 94.7v3.4M703.6 103.9v5.4M699.6 106.6h8" stroke="#c6bac2" stroke-width="1.1" fill="none"/><path d="M707.4 97.7l7 7M714.4 97.7l-7 7" stroke="#a8a8a8" stroke-width="1.3" fill="none"/>
<g fill="none" stroke="#c6bac2" stroke-width="1.2"><path d="M699.6 120.7h13.6v11.4h-13.6z" fill="#f8f3f6"/><path d="M699.6 124.5h13.6M699.6 128.3h13.6M704.1 120.7v11.4M708.7 120.7v11.4"/></g><path d="M704.1 124.5h4.6v3.8h-4.6z" fill="#a6a6a6"/><path d="M699.8 118.4h12.6M699.6 116.9v3M712.8 116.9v3M701.6 117.1l-1.4 1.3 1.4 1.3M710.8 117.1l1.4 1.3-1.4 1.3" stroke="#a8a8a8" stroke-width="1" fill="none"/>
<path d="M775.5 78.1h5.0l-2.5 2.8z" fill="#b4b4b4"/>
<path d="M771.5 101.1h5.0l-2.5 2.8z" fill="#b4b4b4"/>
<path d="M763.5 124.1h5.0l-2.5 2.8z" fill="#b4b4b4"/>
<path d="M824.4 74.2v-2h-12.6l6.6 6.4-6.6 6.4h12.6v-2" fill="none" stroke="#3b3b3b" stroke-width="2" stroke-linejoin="miter"/>
<path d="M831.8 78.1h5.2l-2.6 3z" fill="#333"/>
<path d="M853.6 76.2h8l-2.8 3.2v3.8l-2.4-.8v-3z" fill="#ababab"/>
<path d="M864.9 78.2h5.0l-2.5 2.8z" fill="#b4b4b4"/>
<g><path d="M811.6 94.6h13v14.4h-13z" fill="#f5f1f3" stroke="#c7bcc2" stroke-width="1.1"/><path d="M811.1 94.1h14v3.4h-14z" fill="#bdbabc"/><path d="M818.1 98.8v7.4M814.6 102.9l3.5 3.5 3.5-3.5" stroke="#a3a3a3" stroke-width="1.9" fill="none"/></g>
<path d="M829.9 101.0h5.0l-2.5 2.8z" fill="#b4b4b4"/>
<g fill="none" stroke="#1f78c8"><circle cx="855.2" cy="100.6" r="3.9" stroke-width="1.5" fill="#fafcfe"/><path d="M852.4 103.6l-5.8 5.4" stroke-width="2.2"/></g>
<path d="M864.8 100.9h5.2l-2.6 3z" fill="#333"/>
<g><path d="M819.8 118.2l4.6 4.2-7 7.4-4.6-4.2z" fill="#f5798a"/><path d="M812.8 125.6l4.6 4.2-1.6 1.4-4.8-3.6z" fill="#f9b1bb"/></g>
<path d="M829.8 123.9h5.2l-2.6 3z" fill="#333"/>
<path d="M147.6 178.4h7.2l-3.6 3.8z" fill="#6a6a6a"/>
<rect x="176" y="176.6" width="2" height="2" fill="#a8a8a8"/>
<rect x="176" y="180.2" width="2" height="2" fill="#a8a8a8"/>
<rect x="176" y="183.8" width="2" height="2" fill="#a8a8a8"/>
<path d="M206.2 176.6l9.6 8.6M215.8 176.6l-9.6 8.6" stroke="#5e5e5e" stroke-width="1.9" fill="none"/>
<path d="M241 181l4 3.8 7.6-8" stroke="#767676" stroke-width="2.7" fill="none"/>
<rect x="303.5" y="167.3" width="72" height="29.1" rx="3.8" fill="none" stroke="#ff0000" stroke-width="3"/>
<path d="M907.4 178.6l3.3 3.4 3.3-3.4" stroke="#5a5a5a" stroke-width="1.8" fill="none"/>
<path d="M23.6 209.2v10.6h-12z" fill="#b9b9b9"/>
<rect x="208" y="266" width="93.5" height="20.5" fill="none" stroke="#1f6fd0" stroke-width="2"/>
<rect x="204.5" y="262.5" width="6" height="6" fill="#1f6fd0" stroke="#fff" stroke-width="0.8"/>
<rect x="204.5" y="283.5" width="6" height="6" fill="#1f6fd0" stroke="#fff" stroke-width="0.8"/>
<rect x="299.5" y="262.5" width="6" height="6" fill="#1f6fd0" stroke="#fff" stroke-width="0.8"/>
<rect x="495.5" y="264.5" width="66" height="23" fill="none" stroke="#e0323c" stroke-width="1"/><rect x="497" y="266" width="63" height="20" fill="none" stroke="#fff" stroke-width="2"/><rect x="497" y="266" width="63" height="20" fill="none" stroke="#056b3a" stroke-width="2" stroke-dasharray="7 2" stroke-dashoffset="-3"/>
<rect x="493.5" y="262.5" width="6" height="6" fill="#e0323c" stroke="#fff" stroke-width="1"/>
<rect x="557.5" y="262.5" width="6" height="6" fill="#e0323c" stroke="#fff" stroke-width="1"/>
<rect x="493.5" y="283.5" width="6" height="6" fill="#e0323c" stroke="#fff" stroke-width="1"/>
<rect x="557.5" y="283.5" width="6" height="6" fill="#e0323c" stroke="#fff" stroke-width="1"/>
<rect x="430" y="284.2" width="5" height="5" fill="#056b3a" stroke="#fff" stroke-width="1"/>
<rect x="300.5" y="260.5" width="137" height="33.9" rx="4" fill="none" stroke="#ff0000" stroke-width="3"/>
<path d="M910 215.4h7l-3.5-3.6z" fill="#777"/><path d="M910 614h7l-3.5 3.6z" fill="#777"/>
<path d="M581.4 633v7l-3.6-3.5z" fill="#666"/><path d="M893.8 633v7l3.6-3.5z" fill="#666"/>
<rect x="554.8" y="631" width="2" height="2" fill="#a8a8a8"/>
<rect x="554.8" y="634.6" width="2" height="2" fill="#a8a8a8"/>
<rect x="554.8" y="638.2" width="2" height="2" fill="#a8a8a8"/>
<path d="M32.4 631.4v7.6l-4-3.8z" fill="#c2c2c2"/><path d="M57.4 631.4v7.6l4-3.8z" fill="#c2c2c2"/>
<g fill="none" stroke="#7a7a7a"><circle cx="248.8" cy="635.8" r="7.4" stroke-width="1"/><path d="M244.6 635.8h8.4M248.8 631.6v8.4" stroke-width="1.5"/></g>
<g><circle cx="76" cy="656.6" r="2.6" fill="#6a6a6a"/><path d="M75.6 659.6h10.4v6.4h-10.4z" fill="#fff" stroke="#6a6a6a" stroke-width="1.1"/><path d="M79.4 655h6.6v4" fill="none" stroke="#6a6a6a" stroke-width="1.1"/><path d="M77.6 661.4h1.4M80.2 661.4h1.4M82.8 661.4h1.4M77.6 663.8h1.4M80.2 663.8h1.4M82.8 663.8h1.4" stroke="#6a6a6a" stroke-width="1.1"/></g>
<g fill="none" stroke="#6e6e6e" stroke-width="1.3"><path d="M636.5 654.5h12v12h-12zM640.5 654.5v12M644.5 654.5v12M636.5 658.5h12M636.5 662.5h12"/></g>
<g fill="none" stroke="#6e6e6e"><path d="M674.6 654.5h13v12h-13z" stroke-width="1.3"/><path d="M677.6 656.8h7v7.6h-7z" stroke-width="1.1"/><path d="M679.2 659h3.8M679.2 660.8h3.8M679.2 662.6h3.8" stroke-width="0.9"/></g>
<g fill="none" stroke="#6e6e6e" stroke-width="1.3"><path d="M712.6 654.5h13v12h-13z"/><path d="M717 654.5v7.2M721.2 654.5v7.2h-8.6"/></g>
<path d="M743.2 661h5.6" stroke="#5a5a5a" stroke-width="2"/>
<path d="M856 661h8.4M860.2 656.8v8.4" stroke="#4a4a4a" stroke-width="2"/>
</svg>
</body></html>
